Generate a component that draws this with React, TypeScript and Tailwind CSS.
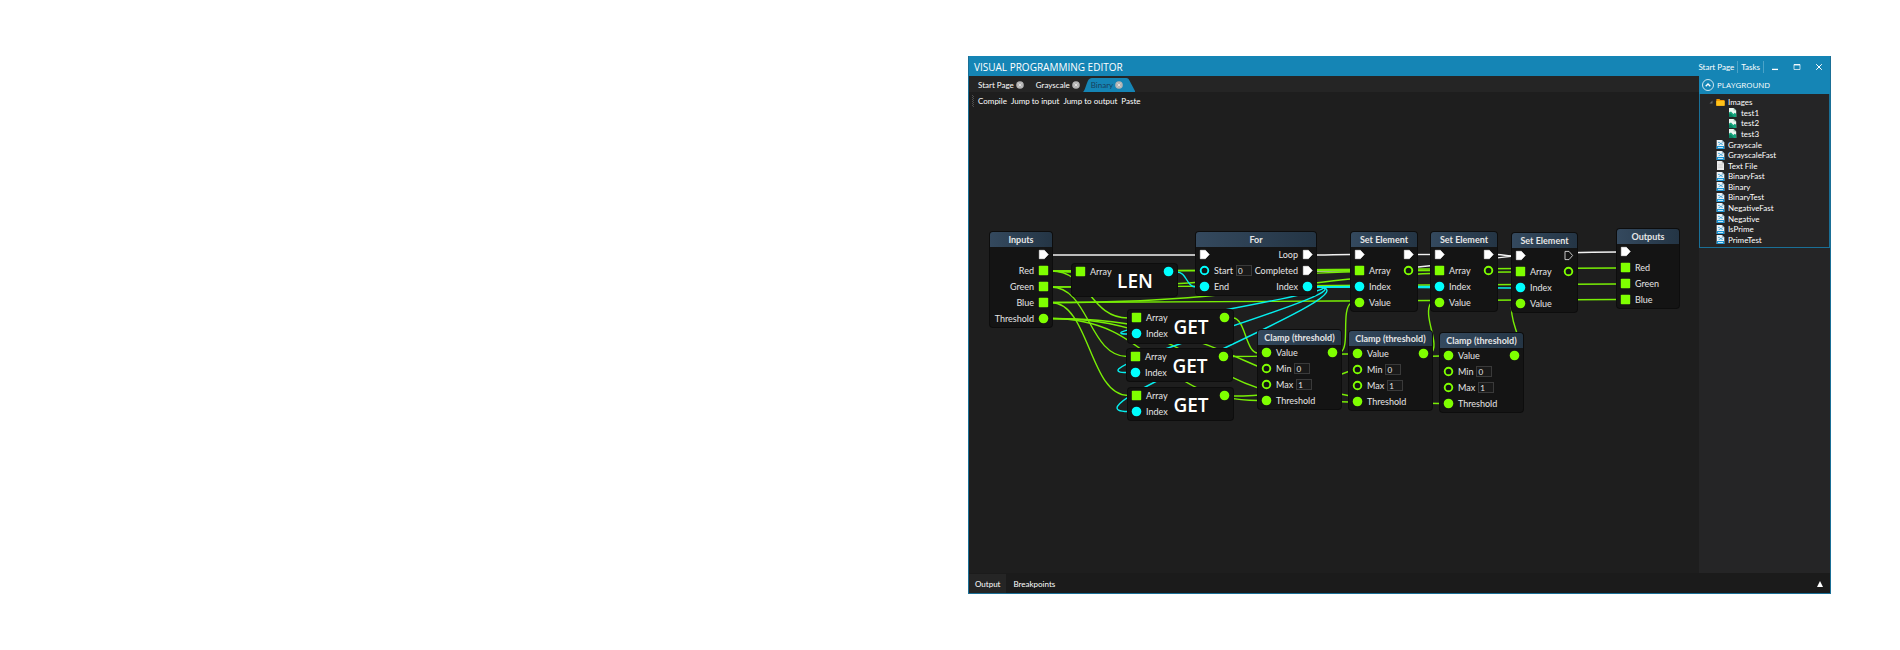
import React from "react";

type Kind = "exec" | "execOff" | "array" | "dot" | "ring" | "indexDot" | "indexRing";
type Pin = { kind: Kind; label?: string; value?: string };
type Row = { left?: Pin; right?: Pin };
type GraphNode = { id: string; place: string; title: string; rows: Row[] };
type CompactNode = { id: string; place: string; title: string; inputs: Pin[]; output: Pin };

const LIME = "#7fff00";
const CYAN = "#00ffff";

function PinShape({ kind }: { kind: Kind }) {
  return (
    <svg viewBox="0 0 9 9" className="size-[9px] shrink-0 overflow-visible" aria-hidden="true">
      {kind === "exec" && <path d="M0.3 0.3H5.4L9.3 4.5L5.4 8.7H0.3Z" fill="#fff" stroke="#fff" strokeWidth="0.6" strokeLinejoin="round" />}
      {kind === "execOff" && <path d="M1 0.4H5L8.6 4.5L5 8.6H1Z" fill="none" stroke="#d8d8d8" strokeWidth="0.9" strokeLinejoin="round" />}
      {kind === "array" && <rect x="-0.2" y="-0.2" width="9.4" height="9.4" rx="0.8" fill={LIME} />}
      {kind === "dot" && <circle cx="4.5" cy="4.5" r="4.8" fill={LIME} />}
      {kind === "indexDot" && <circle cx="4.5" cy="4.5" r="4.8" fill={CYAN} />}
      {kind === "ring" && <circle cx="4.5" cy="4.5" r="3.8" fill="none" stroke={LIME} strokeWidth="1.9" />}
      {kind === "indexRing" && <circle cx="4.5" cy="4.5" r="3.8" fill="none" stroke={CYAN} strokeWidth="1.9" />}
    </svg>
  );
}

function LeftPin({ pin, id }: { pin: Pin; id: string }) {
  return (
    <div className="flex items-center gap-[5px]">
      <PinShape kind={pin.kind} />
      {pin.value !== undefined ? (
        <span className="flex items-center gap-[3px]">
          <label htmlFor={id}>{pin.label}</label>
          <input
            id={id}
            defaultValue={pin.value}
            className="h-[11px] w-4 border border-[#3a3a3a] bg-[#191919] px-px text-[8px] leading-none text-[#e6e6e6] outline-none"
          />
        </span>
      ) : (
        pin.label && <span>{pin.label}</span>
      )}
    </div>
  );
}

function RightPin({ pin }: { pin: Pin }) {
  return (
    <div className="ml-auto flex items-center gap-[5px]">
      {pin.label && <span>{pin.label}</span>}
      <PinShape kind={pin.kind} />
    </div>
  );
}

function NodeCard({ node }: { node: GraphNode }) {
  return (
    <section className={`absolute rounded-[3px] bg-[#141414] text-[9px] leading-none whitespace-nowrap text-[#e6e6e6] ring-1 ring-[#0d0d0d] ${node.place}`}>
      <h2 className="flex h-[15px] items-center justify-center rounded-t-[3px] bg-linear-to-r from-[#34495e] to-[#243545] font-bold">
        {node.title}
      </h2>
      {node.rows.map((row, i) => (
        <div key={i} className="flex h-4 items-center px-1 pb-px">
          {row.left && <LeftPin pin={row.left} id={`${node.id}-${i}`} />}
          {row.right && <RightPin pin={row.right} />}
        </div>
      ))}
    </section>
  );
}

function CompactCard({ node }: { node: CompactNode }) {
  return (
    <section className={`absolute flex w-[105px] rounded-[3px] bg-[#141414] px-1 text-[9px] leading-none whitespace-nowrap text-[#e6e6e6] ring-1 ring-[#0d0d0d] ${node.place}`}>
      <div className="w-10">
        {node.inputs.map((pin, i) => (
          <div key={i} className="flex h-4 items-center pb-px">
            <LeftPin pin={pin} id={`${node.id}-${i}`} />
          </div>
        ))}
      </div>
      <h2 className="flex h-[34px] flex-1 items-center justify-center pr-2.5 font-['Open_Sans','Noto_Sans',sans-serif] text-[19px] leading-none font-semibold text-white">{node.title}</h2>
      <div className="flex h-4 items-center pb-px">
        <PinShape kind={node.output.kind} />
      </div>
    </section>
  );
}

const setRows = (last: boolean): Row[] => [
  { left: { kind: "exec" }, right: { kind: last ? "execOff" : "exec" } },
  { left: { kind: "array", label: "Array" }, right: { kind: "ring" } },
  { left: { kind: "indexDot", label: "Index" } },
  { left: { kind: "dot", label: "Value" } },
];

const clampRows: Row[] = [
  { left: { kind: "dot", label: "Value" }, right: { kind: "dot" } },
  { left: { kind: "ring", label: "Min", value: "0" } },
  { left: { kind: "ring", label: "Max", value: "1" } },
  { left: { kind: "dot", label: "Threshold" } },
];

const nodes: GraphNode[] = [
  {
    id: "inputs",
    place: "left-[21px] top-[120px] w-[62px]",
    title: "Inputs",
    rows: [
      { right: { kind: "exec" } },
      { right: { kind: "array", label: "Red" } },
      { right: { kind: "array", label: "Green" } },
      { right: { kind: "array", label: "Blue" } },
      { right: { kind: "dot", label: "Threshold" } },
    ],
  },
  {
    id: "for",
    place: "left-[227px] top-[120px] w-[120px]",
    title: "For",
    rows: [
      { left: { kind: "exec" }, right: { kind: "exec", label: "Loop" } },
      { left: { kind: "indexRing", label: "Start", value: "0" }, right: { kind: "exec", label: "Completed" } },
      { left: { kind: "indexDot", label: "End" }, right: { kind: "indexDot", label: "Index" } },
    ],
  },
  { id: "set1", place: "left-[382px] top-[120px] w-[66px]", title: "Set Element", rows: setRows(false) },
  { id: "set2", place: "left-[462px] top-[120px] w-[66px]", title: "Set Element", rows: setRows(false) },
  { id: "set3", place: "left-[543px] top-[121px] w-[65px]", title: "Set Element", rows: setRows(true) },
  { id: "clamp1", place: "left-[289px] top-[218px] w-[83px]", title: "Clamp (threshold)", rows: clampRows },
  { id: "clamp2", place: "left-[380px] top-[219px] w-[83px]", title: "Clamp (threshold)", rows: clampRows },
  { id: "clamp3", place: "left-[471px] top-[221px] w-[83px]", title: "Clamp (threshold)", rows: clampRows },
  {
    id: "outputs",
    place: "left-[648px] top-[117px] w-[62px]",
    title: "Outputs",
    rows: [
      { left: { kind: "exec" } },
      { left: { kind: "array", label: "Red" } },
      { left: { kind: "array", label: "Green" } },
      { left: { kind: "array", label: "Blue" } },
    ],
  },
];

const getInputs: Pin[] = [
  { kind: "array", label: "Array" },
  { kind: "indexDot", label: "Index" },
];

const compactNodes: CompactNode[] = [
  { id: "len", place: "left-[103px] top-[152px] h-8", title: "LEN", inputs: [getInputs[0]], output: { kind: "indexDot" } },
  { id: "get1", place: "left-[159px] top-[198px] h-[33px]", title: "GET", inputs: getInputs, output: { kind: "dot" } },
  { id: "get2", place: "left-[158px] top-[237px] h-[32px]", title: "GET", inputs: getInputs, output: { kind: "dot" } },
  { id: "get3", place: "left-[159px] top-[276px] h-[32px]", title: "GET", inputs: getInputs, output: { kind: "dot" } },
];

type Wire = [number, number, number, number];

function curve([x1, y1, x2, y2]: Wire) {
  const mid = (x1 + x2) / 2;
  return `M${x1} ${y1}C${mid} ${y1} ${mid} ${y2} ${x2} ${y2}`;
}

const execWires: Wire[] = [
  [82, 143, 227, 143],
  [347, 143, 382, 142.5],
  [448, 142.5, 462, 142.5],
  [528, 142.5, 543, 144],
  [347, 159, 648, 140],
];

const limeWires: Wire[] = [
  [82, 159, 104, 160],
  [82, 159, 159, 206],
  [82, 159, 382, 158.5],
  [82, 159, 648, 156],
  [82, 175, 158, 244.5],
  [82, 175, 462, 158.5],
  [82, 175, 648, 172],
  [82, 190.5, 159, 283.5],
  [82, 190.5, 543, 160],
  [82, 190.5, 648, 187.5],
  [82, 206.5, 289, 288.5],
  [82, 206.5, 380, 290],
  [82, 206.5, 471, 291.5],
  [264, 206, 289, 241],
  [263, 244.5, 380, 242],
  [264, 284, 471, 244],
];

const cyanWires: Wire[] = [
  [208, 160, 227, 175],
  [347, 175, 382, 174.5],
  [347, 175, 462, 174.5],
  [347, 175, 543, 176],
];

const limeLoops = [
  "M372 240C381 235 372 197 382 191",
  "M462 241C472 233 453 203 462 191",
  "M549 225C548 219 540 203 543 192",
];

const cyanLoops = [
  "M347 175C404 175 102 222 159 222",
  "M347 175C413 175 92 260.5 158 260.5",
  "M347 175C422 175 84 299.5 159 299.5",
];

function Wires() {
  return (
    <svg className="absolute inset-0 size-full" fill="none" strokeWidth="1.4" aria-hidden="true">
      <g stroke="#f2f2f2">{execWires.map((w, i) => <path key={i} d={curve(w)} />)}</g>
      <g stroke="#78ee05">
        {limeWires.map((w, i) => <path key={i} d={curve(w)} />)}
        {limeLoops.map((d) => <path key={d} d={d} />)}
      </g>
      <g stroke="#05eeee">
        {cyanWires.map((w, i) => <path key={i} d={curve(w)} />)}
        {cyanLoops.map((d) => <path key={d} d={d} />)}
      </g>
    </svg>
  );
}

function CloseDot() {
  return (
    <svg viewBox="0 0 8 8" className="size-2" aria-hidden="true">
      <circle cx="4" cy="4" r="3.8" fill="#b4b4b4" />
      <path d="M2.6 2.6L5.4 5.4M5.4 2.6L2.6 5.4" stroke="#e6e6e6" strokeWidth="0.9" />
    </svg>
  );
}

function DocTab({ name, active = false }: { name: string; active?: boolean }) {
  return (
    <div className={active ? "relative flex h-[14px] items-center gap-0.5 pr-3 pl-2 text-[#17405c]" : "flex h-[14px] items-center gap-0.5 pr-[3px] pl-[9px]"}>
      {active && (
        <svg viewBox="0 0 50 14" preserveAspectRatio="none" className="absolute inset-0 size-full" aria-hidden="true">
          <path d="M0 14C2 13 4 2 6 1C7 0 8 0 9 0H40C42 0 43 0 44 2L50 14Z" fill="#1585b5" />
        </svg>
      )}
      <button type="button" className="relative">{name}</button>
      <button type="button" aria-label={`Close ${name}`} className="relative"><CloseDot /></button>
    </div>
  );
}

type Entry = { name: string; icon: "folder" | "image" | "text" | "graph" };

const entries: Entry[] = [
  { name: "Images", icon: "folder" },
  { name: "test1", icon: "image" },
  { name: "test2", icon: "image" },
  { name: "test3", icon: "image" },
  { name: "Grayscale", icon: "graph" },
  { name: "GrayscaleFast", icon: "graph" },
  { name: "Text File", icon: "text" },
  { name: "BinaryFast", icon: "graph" },
  { name: "Binary", icon: "graph" },
  { name: "BinaryTest", icon: "graph" },
  { name: "NegativeFast", icon: "graph" },
  { name: "Negative", icon: "graph" },
  { name: "IsPrime", icon: "graph" },
  { name: "PrimeTest", icon: "graph" },
];

function EntryIcon({ icon }: { icon: Entry["icon"] }) {
  return (
    <svg viewBox="0 0 9 9" className="size-[9px] shrink-0" aria-hidden="true">
      {icon === "folder" && (
        <>
          <path d="M0.3 1.6Q0.3 1 0.9 1H3.4L4.4 2H8Q8.6 2 8.6 2.6V7.2Q8.6 7.8 8 7.8H0.9Q0.3 7.8 0.3 7.2Z" fill="#f39a00" />
          <path d="M0.3 3H8.6V7.2Q8.6 7.8 8 7.8H0.9Q0.3 7.8 0.3 7.2Z" fill="#ffc21a" />
        </>
      )}
      {icon === "image" && (
        <>
          <path d="M1 0H5.6L8.2 2.6V9H1Z" fill="#eef7f2" />
          <path d="M5.6 0L8.2 2.6H5.6Z" fill="#9bcdb5" />
          <path d="M1 4.6L3 3.4L5.4 6L6.8 4.8L8.2 6V9H1Z" fill="#14a37a" />
          <path d="M1 6.6L2.6 5.6L6 9H1Z" fill="#0a7f60" />
        </>
      )}
      {icon === "text" && (
        <>
          <path d="M1 0H5.8L8 2.2V9H1Z" fill="#ececec" />
          <path d="M5.8 0L8 2.2H5.8Z" fill="#b5b5b5" />
          <path d="M2.2 3.4H6.8M2.2 5H6.8M2.2 6.6H6.8" stroke="#c4c4c4" strokeWidth="0.6" />
        </>
      )}
      {icon === "graph" && (
        <>
          <path d="M0.7 0H5.9L8.3 2.4V9H0.7Z" fill="#eef4f8" />
          <path d="M5.9 0L8.3 2.4H5.9Z" fill="#9db9c9" />
          <path d="M0.7 6H8.3V9H0.7Z" fill="#1d96d6" />
          <path d="M2 2.4H3.6L5.6 4.4H6.8M6.4 2.8L2.6 4.8" fill="none" stroke="#2b9bd5" strokeWidth="0.8" />
          <path d="M2 7.5H7" stroke="#d7effb" strokeWidth="0.9" />
        </>
      )}
    </svg>
  );
}

function Explorer() {
  return (
    <aside className="w-[131px] shrink-0 bg-[#252526]">
      <div className="flex h-[18px] items-center gap-[3px] bg-[#1585b5] pl-[3px] font-['Open_Sans','Noto_Sans',sans-serif] text-[8px] leading-none">
        <button type="button" aria-label="Collapse playground">
          <svg viewBox="0 0 12 12" className="size-3" fill="none" stroke="#fff" aria-hidden="true">
            <circle cx="6" cy="6" r="5.5" strokeWidth="0.8" />
            <path d="M3.7 7.2L6 5L8.3 7.2" strokeWidth="1.4" />
          </svg>
        </button>
        <h2>PLAYGROUND</h2>
      </div>
      <div className="border border-t-0 border-[#1a6f96] pt-[3px] pb-0.5">
        <ul className="grid h-[148px] auto-rows-fr">
          {entries.map((entry) => (
            <li key={entry.name} className={entry.icon === "image" ? "flex items-center gap-[3px] pl-7" : "flex items-center gap-0.5 pl-2"}>
              {entry.icon === "image" ? null : (
                <svg viewBox="0 0 6 6" className="size-[6px] shrink-0" aria-hidden="true">
                  {entry.icon === "folder" && <path d="M4.5 1.5V4.5H1.5Z" fill="#6b6b6b" />}
                </svg>
              )}
              <EntryIcon icon={entry.icon} />
              <span className="pl-px">{entry.name}</span>
            </li>
          ))}
        </ul>
      </div>
    </aside>
  );
}

function TitleBar() {
  return (
    <header className="flex h-5 shrink-0 items-center bg-[#1585b5] pt-px pr-[7px] pl-[5px]">
      <h1 className="font-['Open_Sans','Noto_Sans',sans-serif] text-[10px] leading-none">VISUAL PROGRAMMING EDITOR</h1>
      <nav className="ml-auto flex items-center gap-[3px]">
        <a href="#start">Start Page</a>
        <span className="h-3 w-px bg-[#4ba3c8]" />
        <a href="#tasks">Tasks</a>
        <span className="h-3 w-px bg-[#4ba3c8]" />
      </nav>
      <div className="ml-[7px] flex items-center gap-[14px]">
        <button type="button" aria-label="Minimize">
          <svg viewBox="0 0 8 8" className="size-2" aria-hidden="true"><path d="M1 6.4H7" stroke="#fff" strokeWidth="1.3" /></svg>
        </button>
        <button type="button" aria-label="Maximize">
          <svg viewBox="0 0 8 8" className="size-2" fill="none" stroke="#fff" aria-hidden="true">
            <path d="M1 1.5H7V6.5H1Z" strokeWidth="0.7" />
            <path d="M1 1.8H7" strokeWidth="1.2" />
          </svg>
        </button>
        <button type="button" aria-label="Close">
          <svg viewBox="0 0 8 8" className="size-2" aria-hidden="true"><path d="M1.2 1.2L6.8 6.8M6.8 1.2L1.2 6.8" stroke="#fff" strokeWidth="1" /></svg>
        </button>
      </div>
    </header>
  );
}

export default function App() {
  return (
    <main className="flex min-h-screen bg-white py-14 pr-[69px] pl-[968px] font-['Lato','Open_Sans',sans-serif]">
      <div className="flex min-w-0 flex-1 flex-col border border-t-0 border-[#1a6f96] bg-[#1e1e1e] text-[8px] leading-none whitespace-nowrap text-white">
        <TitleBar />
        <div className="flex min-h-0 flex-1">
          <div className="flex min-w-0 flex-1 flex-col">
            <div className="flex h-4 items-end bg-[#252525]">
              <DocTab name="Start Page" />
              <DocTab name="Grayscale" />
              <DocTab name="Binary" active />
            </div>
            <div className="flex h-5 items-center gap-1 pb-0.5 pl-[3px]">
              <svg viewBox="0 0 2 12" className="h-3 w-0.5" aria-hidden="true">
                <path d="M0.5 0V12M1.5 1V12" stroke="#5a5a5a" strokeWidth="0.8" strokeDasharray="1 1" />
              </svg>
              <button type="button">Compile</button>
              <button type="button">Jump to input</button>
              <button type="button">Jump to output</button>
              <button type="button">Paste</button>
            </div>
            <div className="relative min-h-80 flex-1 overflow-hidden">
              <Wires />
              {nodes.map((node) => <NodeCard key={node.id} node={node} />)}
              {compactNodes.map((node) => <CompactCard key={node.id} node={node} />)}
            </div>
          </div>
          <Explorer />
        </div>
        <footer className="flex h-5 shrink-0 items-stretch bg-[#1b1b1b] pt-px">
          <button type="button" className="bg-[#252525] px-1.5">Output</button>
          <button type="button" className="px-[7px]">Breakpoints</button>
          <button type="button" aria-label="Expand output" className="mr-[7px] ml-auto">
            <svg viewBox="0 0 6 6" className="size-[6px]" aria-hidden="true"><path d="M3 0L6 6H0Z" fill="#fff" /></svg>
          </button>
        </footer>
      </div>
    </main>
  );
}
